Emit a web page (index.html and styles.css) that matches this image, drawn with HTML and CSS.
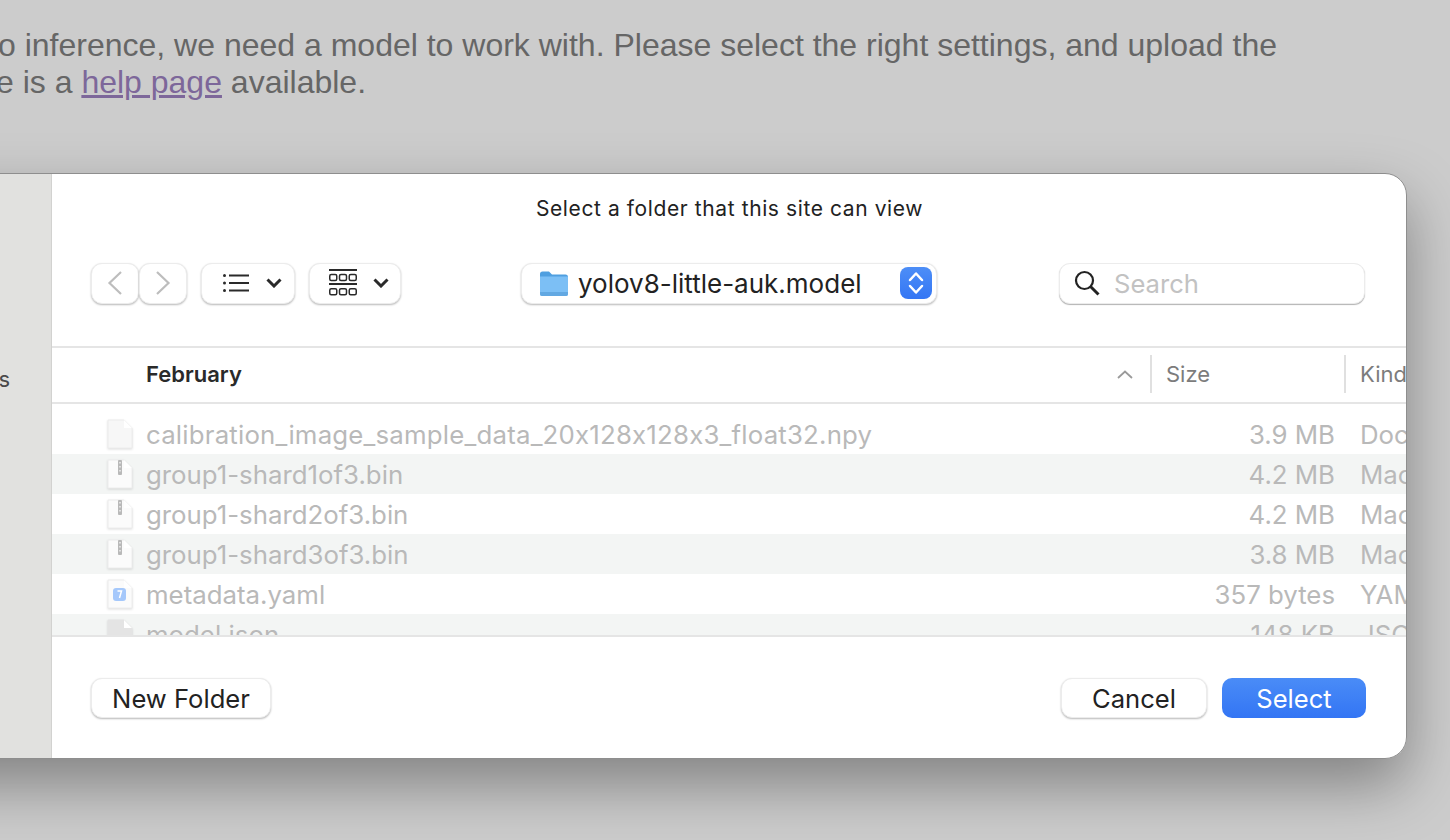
FILE: index.html
```html
<!DOCTYPE html>
<html lang="en">
<head>
<meta charset="utf-8">
<title>Select a folder</title>
<link rel="stylesheet" href="styles.css">
</head>
<body>
<main class="page">
  <p class="intro"><span class="intro-line">o inference, we need a model to work with. Please select the right settings, and upload the</span><span class="intro-line intro-line-second">e is a <a href="#">help page</a> available.</span></p>
</main>
<div class="dialog">
  <aside class="sidebar"><span class="side-label">Downloads</span></aside>
  <section class="panel">
    <h1 class="title">Select a folder that this site can view</h1>
    <div class="toolbar">
      <div class="nav-pair">
        <button class="btn nav"><svg width="18" height="26" viewBox="0 0 18 26"><path d="M15 2 3.500 13 15 24" class="chev-dim"/></svg></button>
        <button class="btn nav"><svg width="18" height="26" viewBox="0 0 18 26"><path d="M3 2 14.500 13 3 24" class="chev-dim"/></svg></button>
      </div>
      <button class="btn view view-list">
        <svg width="26" height="18" viewBox="0 0 26 18"><circle cx="1.500" cy="1.500" r="1.500" class="dot"/><circle cx="1.500" cy="9" r="1.500" class="dot"/><circle cx="1.500" cy="16.500" r="1.500" class="dot"/><path d="M6 1.500h20M6 9h20M6 16.500h20" class="line"/></svg>
        <svg width="16" height="10" viewBox="0 0 16 10"><path d="M1.500 1.500 8 8l6.500-6.500" class="chev-bold"/></svg>
      </button>
      <button class="btn view view-grid">
        <svg width="28" height="28" viewBox="0 0 28 28"><path d="M0 1h28M0 15h28" class="line"/><g class="cells"><rect x=".75" y="5.500" width="7" height="6" rx="1.500"/><rect x="10.500" y="5.500" width="7" height="6" rx="1.500"/><rect x="20.250" y="5.500" width="7" height="6" rx="1.500"/><rect x=".75" y="19.750" width="7" height="6" rx="1.500"/><rect x="10.500" y="19.750" width="7" height="6" rx="1.500"/><rect x="20.250" y="19.750" width="7" height="6" rx="1.500"/></g></svg>
        <svg width="16" height="10" viewBox="0 0 16 10"><path d="M1.500 1.500 8 8l6.500-6.500" class="chev-bold"/></svg>
      </button>
      <div class="path-select">
        <svg width="30" height="28" viewBox="0 0 30 28"><path d="M1 5a2.500 2.500 0 0 1 2.500-2.500h6.500l3 3h13.500A2.500 2.500 0 0 1 29 8v4H1z" fill="#4f9fe0"/><path d="M1 7.500h28V25a2 2 0 0 1-2 2H3a2 2 0 0 1-2-2z" fill="#7cbff5"/><path d="M1 23h28v2a2 2 0 0 1-2 2H3a2 2 0 0 1-2-2z" fill="#62a8e2"/></svg>
        <span class="path-name">yolov8-little-auk.model</span>
        <span class="stepper"><svg width="16" height="26" viewBox="0 0 16 26"><path d="M2 10 8 3.500 14 10M2 16 8 22.500 14 16" class="chev-white"/></svg></span>
      </div>
      <div class="search">
        <svg width="26" height="26" viewBox="0 0 26 26"><circle cx="10.500" cy="10.500" r="8.500" class="mag"/><path d="m16.500 16.500 8 8" class="mag mag-handle"/></svg>
        <span class="search-text">Search</span>
      </div>
    </div>
    <div class="table-head">
      <div class="col-name"><span>February</span><svg width="16" height="9" viewBox="0 0 16 9"><path d="M1 8 8 1.500 15 8" class="chev-sort"/></svg></div>
      <div class="col-size">Size</div>
      <div class="col-kind">Kind</div>
    </div>
    <div class="rows">
      <div class="row"><span class="ico"><svg class="doc" width="28" height="30" viewBox="0 0 28 30"><path d="M2 1h16l8 8v20H2z" fill="#f7f7f7" stroke="#ececec"/><path d="M18 1v8h8z" fill="#fff"/></svg></span><span class="name name-long">calibration_image_sample_data_20x128x128x3_float32.npy</span><span class="size">3.9 MB</span><span class="kind">Document</span></div>
      <div class="row"><span class="ico"><svg class="doc" width="28" height="30" viewBox="0 0 28 30"><path d="M2 1h16l8 8v20H2z" fill="#fbfbfb" stroke="#ececec"/><path d="M18 1v8h8z" fill="#fff"/><rect x="12" y="1" width="4" height="15" rx="1" fill="#b9b9b9"/><path d="M14 3v11" class="zip"/></svg></span><span class="name">group1-shard1of3.bin</span><span class="size">4.2 MB</span><span class="kind">Macintosh</span></div>
      <div class="row"><span class="ico"><svg class="doc" width="28" height="30" viewBox="0 0 28 30"><path d="M2 1h16l8 8v20H2z" fill="#fbfbfb" stroke="#ececec"/><path d="M18 1v8h8z" fill="#fff"/><rect x="12" y="1" width="4" height="15" rx="1" fill="#b9b9b9"/><path d="M14 3v11" class="zip"/></svg></span><span class="name">group1-shard2of3.bin</span><span class="size">4.2 MB</span><span class="kind">Macintosh</span></div>
      <div class="row"><span class="ico"><svg class="doc" width="28" height="30" viewBox="0 0 28 30"><path d="M2 1h16l8 8v20H2z" fill="#fbfbfb" stroke="#ececec"/><path d="M18 1v8h8z" fill="#fff"/><rect x="12" y="1" width="4" height="15" rx="1" fill="#b9b9b9"/><path d="M14 3v11" class="zip"/></svg></span><span class="name">group1-shard3of3.bin</span><span class="size">3.8 MB</span><span class="kind">Macintosh</span></div>
      <div class="row"><span class="ico"><svg class="doc" width="28" height="30" viewBox="0 0 28 30"><path d="M2 1h16l8 8v20H2z" fill="#fbfbfb" stroke="#ececec"/><path d="M18 1v8h8z" fill="#fff"/><rect x="7" y="9" width="13" height="13" rx="3" fill="#a5c8fb"/><path d="M11.500 12h4l-2 7" fill="none" stroke="#fff" stroke-width="1.500"/></svg></span><span class="name">metadata.yaml</span><span class="size">357 bytes</span><span class="kind">YAML</span></div>
      <div class="row"><span class="ico"><svg class="doc" width="28" height="30" viewBox="0 0 28 30"><path d="M2 1h16l8 8v20H2z" fill="#e4e4e4" stroke="#e4e4e4"/><path d="M18 1v8h8z" fill="#fff"/></svg></span><span class="name">model.json</span><span class="size">148 KB</span><span class="kind">JSON</span></div>
    </div>
    <div class="footer">
      <button class="btn action action-new">New Folder</button>
      <div class="footer-right">
        <button class="btn action action-cancel">Cancel</button>
        <button class="action action-primary">Select</button>
      </div>
    </div>
  </section>
</div>
</body>
</html>
```
FILE: styles.css
```css
* { box-sizing: border-box; }
html, body { margin: 0; height: 100%; }
body {
  width: 1450px;
  height: 840px;
  overflow: hidden;
  background: #cccccc;
  font-family: "Inter", "Liberation Sans", sans-serif;
  font-feature-settings: "calt" 0;
  position: relative;
  z-index: 0;
}
.page { padding-top: 27px; }
.intro {
  margin: 0 0 0 -2px;
  font-family: "Liberation Sans", Arial, sans-serif;
  font-size: 32px;
  line-height: 37px;
  color: #666666;
  white-space: nowrap;
}
.intro-line { display: block; }
.intro-line-second { margin-left: -2px; }
.intro a { color: #7d679a; }

.dialog {
  position: absolute;
  left: -100px;
  top: 173px;
  width: 1507px;
  height: 586px;
  display: flex;
  background: #fff;
  border: 1px solid #8e8e8e;
  border-radius: 22px;
  overflow: hidden;
}
body::after {
  content: "";
  position: absolute;
  left: -100px;
  top: 173px;
  width: 1507px;
  height: 586px;
  border-radius: 22px;
  box-shadow: 0 26px 60px rgba(0, 0, 0, .36);
  pointer-events: none;
  z-index: -1;
}

.sidebar {
  flex: 0 0 151px;
  min-width: 0;
  background: #e1e1df;
  border-right: 1px solid #d2d2d0;
  display: flex;
  justify-content: flex-end;
  padding: 191px 41px 0 0;
}
.side-label { flex: none; font-size: 22px; line-height: 28px; color: #4a4a4a; white-space: nowrap; height: 28px; }

.panel { flex: 1; min-width: 0; display: flex; flex-direction: column; overflow: hidden; }
.title {
  margin: 0;
  padding-top: 22px;
  height: 63px;
  width: 1355px;
  text-align: center;
  font-size: 21px;
  line-height: 26px;
  font-weight: 400;
  color: #222;
  letter-spacing: .6px;
}

.btn {
  background: #fff;
  border: 1px solid #ececec;
  border-radius: 11px;
  box-shadow: 0 1px 2px rgba(0, 0, 0, .28);
  padding: 0;
  font-family: inherit;
}
.toolbar { display: flex; align-items: center; height: 42px; padding-left: 39px; margin-top: 25px; flex: none; }
.nav-pair { display: flex; }
.nav { width: 48px; height: 41px; display: flex; align-items: center; justify-content: center; }
.view { height: 41px; display: flex; align-items: center; }
.view-list { width: 94px; margin-left: 14px; padding-left: 21px; gap: 17px; }
.view-grid { width: 92px; margin-left: 14px; padding-left: 19px; gap: 16px; }
.chev-dim { fill: none; stroke: #bdbdbd; stroke-width: 2.200; }
.chev-bold { fill: none; stroke: #2a2a2a; stroke-width: 3; }
.chev-white { fill: none; stroke: #fff; stroke-width: 2.500; stroke-linecap: round; stroke-linejoin: round; }
.chev-sort { fill: none; stroke: #9a9a9a; stroke-width: 1.800; }
.dot { fill: #2a2a2a; }
.line { fill: none; stroke: #2a2a2a; stroke-width: 2; }
.cells rect { fill: none; stroke: #2a2a2a; stroke-width: 1.500; }
.zip { fill: none; stroke: #eeeeee; stroke-width: 1.500; stroke-dasharray: 1.500 2.500; }

.path-select {
  margin-left: 120px;
  width: 416px;
  height: 41px;
  display: flex;
  align-items: center;
  padding: 0 4px 0 17px;
  background: #fff;
  border: 1px solid #ececec;
  border-radius: 11px;
  box-shadow: 0 1px 2px rgba(0, 0, 0, .28);
}
.path-name { margin-left: 9px; flex: 1; font-size: 26px; color: #222; white-space: nowrap; }
.stepper {
  width: 32px;
  height: 32px;
  border-radius: 8px;
  background: linear-gradient(#4d8ef7, #3476f4);
  display: flex;
  align-items: center;
  justify-content: center;
}
.search {
  margin-left: 122px;
  width: 306px;
  height: 41px;
  display: flex;
  align-items: center;
  padding-left: 14px;
  gap: 14px;
  background: #fff;
  border: 1px solid #ececec;
  border-radius: 11px;
  box-shadow: 0 1px 1px rgba(0, 0, 0, .3);
}
.mag { fill: none; stroke: #222; stroke-width: 2.200; }
.mag-handle { stroke-width: 3; }
.search-text { font-size: 25.600px; color: #c2c2c2; }

.table-head {
  margin-top: 42px;
  height: 58px;
  flex: none;
  display: flex;
  align-items: center;
  padding-bottom: 2px;
  border-top: 2px solid #e5e5e5;
  border-bottom: 2px solid #e5e5e5;
  font-size: 22px;
  color: #7c7c7c;
}
.col-name {
  width: 1100px;
  height: 38px;
  display: flex;
  align-items: center;
  justify-content: space-between;
  padding: 0 17px 0 94px;
  border-right: 2px solid #e0e0e0;
  font-weight: 600;
  color: #2a2a2a;
  flex: none;
}
.col-size {
  width: 194px;
  height: 38px;
  line-height: 38px;
  padding-left: 14px;
  border-right: 2px solid #e0e0e0;
  flex: none;
}
.col-kind { padding-left: 14px; white-space: nowrap; }

.rows { height: 233px; flex: none; overflow: hidden; padding-top: 10px; border-bottom: 2px solid #e5e5e5; }
.row {
  height: 40px;
  display: flex;
  align-items: center;
  font-size: 25.800px;
  color: #b9b9b9;
  white-space: nowrap;
}
.row:nth-child(even) { background: #f3f5f4; }
.ico { width: 94px; flex: none; display: flex; justify-content: flex-end; padding-right: 12px; }
.doc { display: block; filter: drop-shadow(0 1px 1px rgba(0, 0, 0, .12)); }
.name { width: 1000px; flex: none; }
.name-long { letter-spacing: .2px; }
.size { width: 195px; flex: none; text-align: right; margin-left: -6px; }
.kind { margin-left: 25px; }

.footer {
  flex: 1;
  display: flex;
  justify-content: space-between;
  align-items: flex-start;
  padding: 41px 40px 0 39px;
}
.footer-right { display: flex; gap: 15px; }
.action {
  height: 40px;
  font-family: inherit;
  font-size: 25.600px;
  color: #222;
  text-align: center;
  padding: 0;
}
.action-new { width: 180px; }
.action-cancel { width: 146px; }
.action-primary {
  width: 144px;
  border: 0;
  border-radius: 10px;
  color: #fff;
  background: linear-gradient(#4a8cf7, #3375f4);
}
```
